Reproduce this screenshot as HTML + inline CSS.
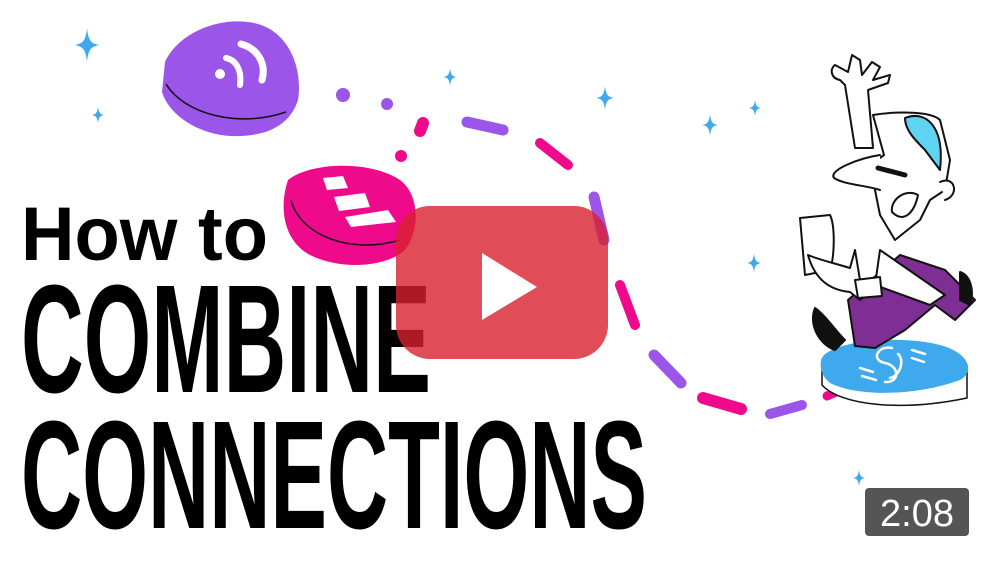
<!DOCTYPE html>
<html><head><style>
html,body{margin:0;padding:0;background:#fff;width:1000px;height:563px;overflow:hidden}
svg{display:block}
</style></head><body>
<svg width="1000" height="563" viewBox="0 0 1000 563" xmlns="http://www.w3.org/2000/svg">
<defs>
<path id="sp" d="M0,-12 C1,-3 3,-1 9,0 C3,1 1,3 0,12 C-1,3 -3,1 -9,0 C-3,-1 -1,-3 0,-12Z"/>
</defs>
<g fill="#3fa9ee">
<use href="#sp" transform="translate(87,45) scale(1.4)"/>
<use href="#sp" transform="translate(98,115) scale(0.7)"/>
<use href="#sp" transform="translate(450,77) scale(0.75)"/>
<use href="#sp" transform="translate(605,98) scale(1)"/>
<use href="#sp" transform="translate(710,125) scale(0.9)"/>
<use href="#sp" transform="translate(755,108) scale(0.7)"/>
<use href="#sp" transform="translate(754,263) scale(0.8)"/>
<use href="#sp" transform="translate(859,478) scale(0.7)"/>
</g>
<path d="M165,62 C180,30 225,15 258,24 C290,33 303,70 298,100 C290,125 268,135 240,136 C205,138 170,118 162,92 Z" fill="#9b55e8"/>
<path d="M166,84 C185,115 240,128 286,112" fill="none" stroke="#111" stroke-width="1.5"/>
<g fill="#fff"><circle cx="220" cy="74" r="5"/>
<path d="M226,58 C236,60 242,70 240,85" stroke="#fff" stroke-width="6" fill="none" stroke-linecap="round"/>
<path d="M241,44 C256,48 267,62 262,80" stroke="#fff" stroke-width="7" fill="none" stroke-linecap="round"/></g>
<path d="M288,180 C310,162 370,160 400,180 C420,195 420,230 405,250 C385,268 340,270 310,255 C285,242 278,210 288,180Z" fill="#ef0a8c"/>
<path d="M291,200 C300,235 350,255 400,240" fill="none" stroke="#111" stroke-width="1.5"/>
<g fill="#fff"><path d="M323,178 L343,176 L348,188 L327,190Z"/><path d="M334,197 L365,193 L370,207 L339,211Z"/><path d="M345,217 L388,210 L396,222 L351,227Z"/></g>
<g stroke-linecap="round" fill="none">
<circle cx="343" cy="95" r="7" fill="#9b55e8"/>
<circle cx="387" cy="104" r="6" fill="#9b55e8"/>
<path d="M423,123 L420,131" stroke="#ef0a8c" stroke-width="12"/>
<circle cx="401" cy="156" r="6" fill="#ef0a8c"/>
<path d="M467,122 L503,130" stroke="#9b55e8" stroke-width="11"/>
<path d="M540,143 L568,165" stroke="#ef0a8c" stroke-width="10"/>
<path d="M594,197 L604,240" stroke="#9b55e8" stroke-width="11"/>
<path d="M620,285 L635,325" stroke="#ef0a8c" stroke-width="10"/>
<path d="M654,355 L681,383" stroke="#9b55e8" stroke-width="11"/>
<path d="M703,398 L741,409" stroke="#ef0a8c" stroke-width="12"/>
<path d="M770,414 L802,405" stroke="#9b55e8" stroke-width="10"/>
<path d="M827,396 L843,389" stroke="#ef0a8c" stroke-width="9"/>
</g>
<path d="M822,360 L822,385 C840,405 900,412 967,398 L967,370 Z" fill="#fff" stroke="#111" stroke-width="1.5"/>
<path d="M824,355 C840,340 900,335 940,345 C970,353 975,372 960,380 C920,395 860,398 830,383 C820,375 818,362 824,355Z" fill="#3fa9ee"/>
<g stroke="#fff" stroke-width="2.5" fill="none" stroke-linecap="round">
<path d="M892,348 C878,345 870,360 885,363 C900,366 900,383 885,382"/>
<path d="M898,354 C905,360 900,376 890,378"/>
<path d="M912,350 L925,354 M912,358 L924,362"/>
<path d="M860,368 L873,372 M862,376 L876,380"/>
</g>
<g stroke="#111" stroke-width="2" stroke-linejoin="round" stroke-linecap="round">
<path d="M871,280 L900,255 L945,270 L975,300 L955,320 L935,305 L905,330 L875,348 L855,346 L848,300Z" fill="#7f2f94"/>
<path d="M815,308 C808,325 820,345 835,350 L845,340 C835,330 825,315 815,308Z" fill="#111"/>
<path d="M960,272 C970,275 975,290 970,305 L960,300Z" fill="#111"/>
<path d="M873,115 L884,155 L870,165 L880,215 L895,240 L920,220 L930,200 L945,190 L950,160 L940,120 C930,110 890,112 873,115Z" fill="#fff"/>
<path d="M905,118 C925,110 945,125 940,170 L925,150 C915,140 905,130 905,118Z" fill="#5fd4f2"/>
<path d="M880,155 C860,158 828,170 834,178 C845,185 865,185 880,190" fill="#fff"/>
<path d="M878,168 L905,175" stroke-width="5"/>
<path d="M892,212 C890,200 905,188 918,195 C915,210 905,225 892,212Z" fill="#fff"/>
<path d="M940,182 C955,175 960,195 945,200" fill="#fff"/>
<path d="M855,148 L845,85 L840,80 C830,78 830,68 835,65 L848,72 L852,55 L860,60 L862,75 L872,62 L880,67 L873,80 L890,75 L888,83 L868,90 L873,148Z" fill="#fff"/>
<path d="M880,250 L945,295 L930,305 L875,285Z" fill="#fff"/>
<path d="M800,218 L830,215 C835,225 835,255 830,270 L805,275Z" fill="#fff"/>
<path d="M808,255 C820,260 830,262 850,268 L855,250 L860,280 L880,285 L860,300 L850,292 C830,290 815,280 808,255Z" fill="#fff"/>
<path d="M855,280 L880,277 L882,296 L858,298Z" fill="#fff"/>
</g>
<g font-family="'Liberation Sans',sans-serif" font-weight="bold" fill="#000">
<text x="21" y="260" font-size="76" textLength="247" lengthAdjust="spacingAndGlyphs">How to</text>
<text x="21" y="392" font-size="154" textLength="410" lengthAdjust="spacingAndGlyphs">COMBINE</text>
<text x="21" y="528" font-size="154" textLength="626" lengthAdjust="spacingAndGlyphs">CONNECTIONS</text>
</g>
<rect x="396" y="206" width="212" height="153" rx="34" fill="#d8202f" fill-opacity="0.8"/>
<path d="M482,253 L537,287 L482,320Z" fill="#fff"/>
<rect x="865" y="488" width="104" height="48" rx="4" fill="#555"/>
<text x="917" y="526" font-family="'Liberation Sans',sans-serif" font-size="38" fill="#fff" text-anchor="middle">2:08</text>
</svg>
</body></html>
